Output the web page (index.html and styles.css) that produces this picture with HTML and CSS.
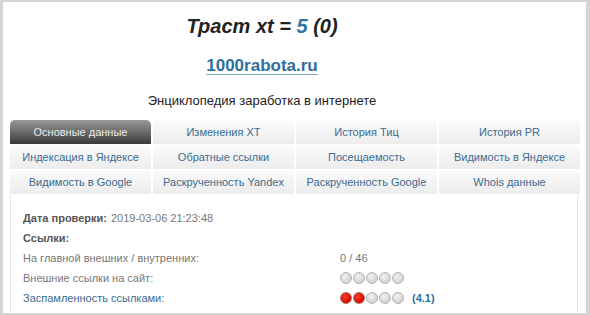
FILE: index.html
```html
<!DOCTYPE html>
<html lang="ru">
<head>
<meta charset="UTF-8" />
<title>Траст xt — 1000rabota.ru</title>
<link rel="stylesheet" href="styles.css">
</head>
<body>

<div class="page">
  <div class="head">
    <h1>Траст xt = <span class="num">5</span> (0)</h1>
    <a class="site" href="#">1000rabota.ru</a>
    <p class="desc">Энциклопедия заработка в интернете</p>
  </div>

  <!-- Вкладки -->
  <div class="tabs">
    <a class="tab active" href="#">Основные данные</a>
    <a class="tab" href="#">Изменения XT</a>
    <a class="tab" href="#">История Тиц</a>
    <a class="tab" href="#">История PR</a>
    <a class="tab" href="#">Индексация в Яндексе</a>
    <a class="tab" href="#">Обратные ссылки</a>
    <a class="tab" href="#">Посещаемость</a>
    <a class="tab" href="#">Видимость в Яндексе</a>
    <a class="tab" href="#">Видимость в Google</a>
    <a class="tab" href="#">Раскрученность Yandex</a>
    <a class="tab" href="#">Раскрученность Google</a>
    <a class="tab" href="#">Whois данные</a>
  </div>

  <div class="panel">
    <div class="row"><b>Дата проверки:</b> 2019-03-06 21:23:48</div>
    <div class="row"><b>Ссылки:</b></div>
    <div class="row">
      <span class="label">На главной внешних / внутренних:</span>
      <span class="val">0 / 46</span>
    </div>
    <div class="row">
      <span class="label">Внешние ссылки на сайт:</span>
      <span class="val">
        <i class="dot"></i><i class="dot"></i><i class="dot"></i><i class="dot"></i><i class="dot"></i>
      </span>
    </div>
    <div class="row">
      <a class="label link" href="#">Заспамленность ссылками:</a>
      <span class="val">
        <i class="dot red"></i><i class="dot red"></i><i class="dot"></i><i class="dot"></i><i class="dot"></i>
        <b class="score">(4.1)</b>
      </span>
    </div>
  </div>
</div>

</body>
</html>
```

FILE: styles.css
```css
body {
  margin: 0;
  background: #d5d5d5;
  font-family: "Liberation Sans", Arial, sans-serif;
  height: 315px;
  overflow: hidden;
}
.page {
  background: white;
  margin: 2px 4px 0 3px;
  height: 311px;
  padding: 0 6px 0 7px;
  overflow: hidden;
}

/* Шапка */
.head {
  text-align: center;
  padding-right: 66px;
}
h1 {
  margin: 0;
  padding-top: 10px;
  font-size: 20px;
  font-style: italic;
  font-weight: bold;
  color: #222;
  line-height: 28px;
}
h1 .num {
  color: #2f73a0;
}
.site {
  display: inline-block;
  margin-top: 15px;
  font-size: 17px;
  font-weight: bold;
  color: #2f6f9c;
  line-height: 22px;
  text-decoration: underline;
  text-decoration-color: #7fa4c0;
  text-underline-offset: 3px;
}
.desc {
  margin: 15px 0 0;
  font-size: 13px;
  color: #222;
  line-height: 18px;
}

/* Вкладки */
.tabs {
  margin-top: 10px;
  display: grid;
  grid-template-columns: repeat(4, 1fr);
  gap: 1px 2px;
}
.tab {
  height: 24px;
  line-height: 24px;
  text-align: center;
  font-size: 11px;
  color: #3b6b90;
  text-decoration: none;
  background: linear-gradient(#fbfbfb, #ececec);
  border-radius: 4px 4px 0 0;
}
.tab.active {
  background: linear-gradient(#9a9a9a, #3a3a3a);
  color: #ececec;
  border-radius: 5px 5px 0 0;
}

/* Данные */
.panel {
  border: 1px solid #e6e6e6;
  border-top: none;
  margin-top: 1px;
  margin-right: 2px;
  padding: 13px 12px 10px;
  height: 120px;
  font-size: 11px;
  color: #777;
}
.row {
  display: flex;
  align-items: center;
  height: 20px;
}
.row b {
  color: #555;
  margin-right: 4px;
}
.label {
  width: 317px;
}
.link {
  color: #3b6b90;
  text-decoration: none;
}
.val {
  display: flex;
  align-items: center;
}
.dot {
  display: inline-block;
  width: 10px;
  height: 10px;
  border-radius: 50%;
  border: 1px solid #b4b4b4;
  background: radial-gradient(circle at 40% 35%, #f2f2f2, #d2d2d2 70%);
  margin-right: 1px;
}
.dot.red {
  border-color: #a87070;
  background: radial-gradient(circle at 40% 35%, #ff3a2a, #d20d00 70%);
}
.score {
  color: #2f6f9c !important;
  margin-left: 7px;
}
```
